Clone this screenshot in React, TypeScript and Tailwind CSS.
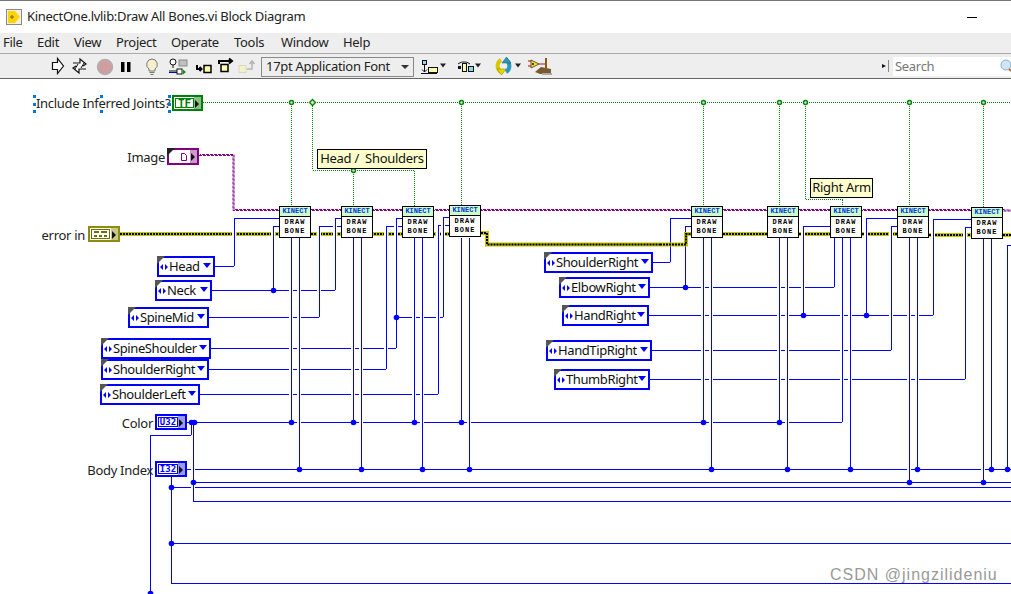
import React from "react";

const FONT = "font-['Noto_Sans','Liberation_Sans',sans-serif] tracking-[-0.3px]";

// every diagram coordinate below is a screen pixel; the canvas starts at y=79
const TOP = 79;

const NODES = [
  [279, 206],
  [341, 206],
  [402, 206],
  [449, 205],
  [691, 206],
  [767, 206],
  [830, 206],
  [897, 206],
  [971, 207],
];

const ENUMS: [string, number, number, number][] = [
  ["Head", 157, 256, 58],
  ["Neck", 155, 280, 57],
  ["SpineMid", 128, 307, 81],
  ["SpineShoulder", 101, 338, 110],
  ["ShoulderRight", 101, 359, 108],
  ["ShoulderLeft", 100, 384, 100],
  ["ShoulderRight", 544, 252, 109],
  ["ElbowRight", 559, 277, 91],
  ["HandRight", 562, 305, 87],
  ["HandTipRight", 546, 340, 106],
  ["ThumbRight", 554, 369, 96],
];

const LABELS: [string, number, number][] = [
  ["Image", 165, 158],
  ["error in", 85, 236],
  ["Color", 153, 424],
  ["Body Index", 153, 471],
];

const H: [number, number, number][] = [
  [266, 215, 234], [218, 234, 279], [290, 212, 335], [218, 335, 341], [226, 273, 279],
  [317, 209, 319], [226, 319, 341], [348, 211, 396], [218, 396, 402], [369, 209, 386],
  [226, 386, 402], [394, 200, 438], [225, 438, 449], [317, 396, 443], [217, 443, 449],
  [422, 187, 842], [435, 150, 191], [482, 193, 1011], [501, 193, 1011], [469, 187, 1011],
  [487, 171, 1011], [543, 171, 1011], [583, 171, 1011], [262, 653, 670], [218, 670, 691],
  [287, 650, 834], [226, 685, 691], [315, 649, 933], [226, 803, 830], [218, 866, 897],
  [219, 933, 971], [350, 652, 891], [226, 891, 897], [379, 650, 965], [227, 965, 971],
  [245, 1007, 1011],
];

const V: [number, number, number][] = [
  [234, 218, 266], [273, 226, 290], [335, 218, 290], [319, 226, 317], [396, 218, 348],
  [386, 226, 369], [438, 225, 394], [443, 217, 317], [670, 218, 262], [685, 226, 287],
  [834, 238, 287], [803, 226, 315], [866, 218, 315], [933, 219, 315], [891, 226, 350],
  [965, 227, 379], [1007, 245, 469],
  ...[291, 353, 414, 461, 703, 779, 842].map((x): [number, number, number] => [x, 238, 422]),
  ...[909, 983].map((x): [number, number, number] => [x, 238, 482]),
  ...[299, 361, 422, 469, 711, 787, 850, 917, 991].map((x): [number, number, number] => [x, 238, 469]),
  [191, 422, 435], [193, 422, 501], [171, 476, 583], [150, 435, 594],
];

const DOTS = [
  [191, 422], [194, 422],
  ...[291, 353, 414, 461, 703, 779].map((x) => [x, 422]),
  ...[299, 361, 422, 469, 711, 787, 850, 917, 991, 1007].map((x) => [x, 469]),
  [273, 290], [396, 317], [685, 287], [803, 315], [866, 315],
  [193, 482], [909, 482], [983, 482], [171, 487], [171, 543], [150, 593],
];

// straight runs only, starting on whole pixels, so that the 1-1 dash stays crisp
const DOTTED = [
  "M203 102.5H1011",
  "M291.5 102V206",
  "M312.5 102V170",
  "M313 170.5H415",
  "M414.5 171V206",
  "M353.5 168V206",
  "M461.5 102V205",
  "M703.5 102V206",
  "M779.5 102V206",
  "M805.5 102V199",
  "M806 199.500H843",
  "M842.5 200V206",
  "M909.5 102V206",
  "M983.5 102V207",
];

const GREEN_NODES = [[291, 102], [461, 102], [703, 102], [779, 102], [805, 102], [909, 102], [983, 102], [353, 170]];

const ERROR_WIRES = [
  "M120 234H279",
  "M311 234H402",
  "M433 234H449",
  "M481 233H487V244.5H660",
  "M723 234H767",
  "M799 234H830",
  "M862 234H897",
  "M929 235H971",
  "M1003 235H1011",
];

const PURPLE = "M199 155.5H233V210.5H1003V211H1011";

const ErrorWire = ({ d }: { d: string }) => (
  <g fill="none">
    <path d={d} stroke="#c4c400" strokeWidth={4} />
    <path d={d} stroke="#000" strokeWidth={2} strokeDasharray="2 1" />
  </g>
);

const Wires = () => (
  <svg className="absolute left-0 top-0" width={1011} height={515} viewBox={`0 ${TOP} 1011 515`}>
    <g fill="none" stroke="#008000" strokeDasharray="1 1">
      {DOTTED.map((d) => (
        <path key={d} d={d} />
      ))}
    </g>
    {GREEN_NODES.map(([x, y]) => (
      <circle key={`${x}-${y}`} cx={x + 0.5} cy={y + 0.5} r={2} fill="#c8e8c8" stroke="#008000" strokeWidth={1.4} />
    ))}
    <path d="M312.500 99.500l3 3-3 3-3-3z" fill="#c8e8c8" stroke="#008000" strokeWidth={1.3} />

    <g fill="none" stroke="#800080">
      <path d={PURPLE} strokeDasharray="3 1" />
      <path d={PURPLE} strokeDasharray="3 1" strokeDashoffset={2} transform="translate(1 -1)" />
    </g>

    {ERROR_WIRES.map((d) => (
      <ErrorWire key={d} d={d} />
    ))}

    <g stroke="#0000ff" fill="none">
      {H.map(([y, a, b]) => (
        <path key={`${y}-${a}`} d={`M${a} ${y + 0.5}H${b}`} />
      ))}
    </g>
    <g stroke="#fff" strokeWidth={4} fill="none">
      {V.map(([x, a, b]) => (
        <path key={`${x}-${a}`} d={`M${x} ${a + 3}V${b - 3}`} />
      ))}
    </g>
    <g stroke="#0000ff" fill="none">
      {V.map(([x, a, b]) => (
        <path key={`${x}-${a}`} d={`M${x + 0.5} ${a}V${b}`} />
      ))}
    </g>
    <ErrorWire d="M660 244.5H686V234H691" />
    {DOTS.map(([x, y]) => (
      <circle key={`${x}-${y}`} cx={x + 0.5} cy={y + 0.5} r={2.8} fill="#0000ff" />
    ))}
  </svg>
);

const Node = ({ x, y }: { x: number; y: number }) => (
  <div
    className="absolute flex h-[32px] w-[32px] flex-col border border-black bg-white text-center font-['Liberation_Mono',monospace] text-[7px] font-bold leading-[9px]"
    style={{ left: x, top: y - TOP }}
  >
    <div className="h-[10px] border-b border-black bg-[#ccffcc] tracking-[0px] text-[#0033dd]">KINECT</div>
    <div className="pt-[1px] tracking-[1px] text-black">
      DRAW
      <br />
      BONE
    </div>
  </div>
);

const EnumControl = ({ text, x, y, w }: { text: string; x: number; y: number; w: number }) => (
  <div
    className={`absolute flex h-[21px] items-center border-2 border-[#0000ff] bg-white pl-[1px] pr-[2px] text-[13px] text-[#111] ${FONT} tracking-[-0.4px]`}
    style={{ left: x, top: y - TOP, width: w }}
  >
    <span className="absolute -left-[2px] -top-[2px] h-0 w-0 border-r-[8px] border-t-[8px] border-r-transparent border-t-[#555]" />
    <svg width={8} height={6} viewBox="0 0 8 6" className="mr-[1px] shrink-0">
      <path d="M3 0v6L0 3zM5 0v6l3-3z" fill="#0000ff" />
    </svg>
    <span className="flex-1 whitespace-nowrap">{text}</span>
    <svg width={8} height={5} viewBox="0 0 8 5" className="-mt-[3px] shrink-0">
      <path d="M0 0h8L4 5z" fill="#0000ff" />
    </svg>
  </div>
);

const Arrow = () => (
  <svg width={4} height={8} viewBox="0 0 4 8" className="absolute right-[2px] top-[3px]">
    <path d="M0 0l4 4-4 4z" fill="#111" />
  </svg>
);

const Terminal = ({ x, y, w, text, size, outer, inner, shade }: { x: number; y: number; w: number; text: string; size: string; outer: string; inner: string; shade: string }) => (
  <div
    className={`absolute flex h-[16px] items-center border-2 bg-white ${outer}`}
    style={{ left: x, top: y - TOP, width: w }}
  >
    <div className={`ml-[1px] flex h-[10px] flex-1 items-center justify-center border font-['DejaVu_Sans_Mono',monospace] font-bold leading-none tracking-[0px] ${size} ${inner}`}>
      {text}
    </div>
    <div className={`h-full w-[7px] ${shade}`} />
    <Arrow />
  </div>
);

const Note = ({ text, x, y, w }: { text: string; x: number; y: number; w: number }) => (
  <div
    className={`absolute flex h-[20px] items-center justify-center whitespace-pre border border-black bg-[#ffffcc] text-[13px] text-[#111] ${FONT}`}
    style={{ left: x, top: y - TOP, width: w }}
  >
    {text}
  </div>
);

const Label = ({ text, right, y }: { text: string; right: number; y: number }) => (
  <div
    className={`absolute -translate-y-1/2 whitespace-nowrap text-[13px] text-[#222] ${FONT}`}
    style={{ right: 1011 - right, top: y - TOP }}
  >
    {text}
  </div>
);

const HANDLES = [
  [33, 95], [33, 103], [33, 110], [100, 95], [100, 110], [168, 95], [168, 103], [168, 110],
];

const Canvas = () => (
  <div className="relative flex-1 overflow-hidden bg-white">
    <Wires />
    {/* front panel terminals */}
    <div className={`absolute left-[36px] top-[15px] whitespace-nowrap text-[13px] leading-[18px] text-[#222] ${FONT}`}>
      Include Inferred Joints?
    </div>
    {HANDLES.map(([x, y]) => (
      <div key={`${x}-${y}`} className="absolute h-[3px] w-[3px] bg-[#0078d7]" style={{ left: x, top: y - TOP }} />
    ))}
    <Terminal x={172} y={95} w={31} text="TF" size="text-[11px]" outer="border-[#008000]" inner="border-[#008000] text-[#008000]" shade="bg-[#88c088]" />
    <div className="absolute left-[167px] top-[69px] flex h-[17px] w-[32px] items-center border-2 border-[#800080] bg-white">
      <span className="absolute -left-[2px] -top-[2px] h-0 w-0 border-r-[8px] border-t-[8px] border-r-transparent border-t-[#222]" />
      <svg width={8} height={8} viewBox="0 0 8 8" className="ml-[11px]">
        <path d="M1.500.5h3l2 2v5h-5z" fill="#fff" stroke="#800080" />
      </svg>
      <div className="absolute right-0 top-0 h-full w-[7px] bg-[#cc99cc]" />
      <Arrow />
    </div>
    <div className="absolute left-[88px] top-[147px] flex h-[16px] w-[32px] items-center border-2 border-[#8c8c10] bg-white">
      <svg width={20} height={10} viewBox="0 0 20 10" className="ml-[1px]">
        <rect x={0.5} y={0.5} width={18} height={9} fill="#fff" stroke="#6f6f00" />
        <path d="M3 3h5M10 3h6" stroke="#6f6f00" strokeWidth={2} />
        <path d="M3 7h3M8 7h3M13 7h3" stroke="#6f6f00" strokeWidth={2} />
      </svg>
      <div className="absolute right-0 top-0 h-full w-[7px] bg-[#c8c88a]" />
      <Arrow />
    </div>
    <Terminal x={155} y={414} w={32} text="U32" size="text-[9px]" outer="border-[#0000ff]" inner="border-[#0000ff] text-[#0000ff]" shade="bg-[#9999ff]" />
    <Terminal x={155} y={461} w={32} text="I32" size="text-[9px]" outer="border-[#0000ff]" inner="border-[#0000ff] text-[#0000ff]" shade="bg-[#9999ff]" />

    {LABELS.map(([text, right, y]) => (
      <Label key={text} text={text} right={right} y={y} />
    ))}
    {ENUMS.map(([text, x, y, w]) => (
      <EnumControl key={`${text}-${x}`} text={text} x={x} y={y} w={w} />
    ))}
    {NODES.map(([x, y]) => (
      <Node key={x} x={x} y={y} />
    ))}
    <Note text="Head /  Shoulders" x={317} y={149} w={110} />
    <Note text="Right Arm" x={810} y={178} w={63} />

    <div className="absolute left-[830px] top-[486px] whitespace-nowrap font-['Liberation_Sans',sans-serif] text-[16px] leading-[20px] tracking-[1px] text-[#999999]">
      CSDN @jingzilideniu
    </div>
  </div>
);

const ToolIcons = () => (
  <svg width={210} height={24} viewBox="0 0 210 24" className="ml-[50px] shrink-0">
    {/* run */}
    <path d="M2.500 8.500h5v-4l6 7.500-6 7.500v-4h-5z" fill="#fff" stroke="#111" strokeWidth={1.2} />
    {/* run continuously */}
    <path d="M23 9h7V5l6 5-3 2M36 15h-7v4l-6-5 3-2" fill="#fff" stroke="#111" strokeWidth={1.2} />
    <path d="M25 15l3-5M31 14l3-5" fill="none" stroke="#111" strokeWidth={1} />
    {/* abort */}
    <circle cx={55} cy={13} r={7.500} fill="#cf9f9f" stroke="#b0b0b0" strokeWidth={1.500} />
    {/* pause */}
    <path d="M71 8h3.500v10H71zM77 8h3.500v10H77z" fill="#000" />
    {/* highlight */}
    <path d="M102 5a5.500 5.500 0 0 1 3 10v2h-6v-2a5.500 5.500 0 0 1 3-10z" fill="#f4f0cf" stroke="#777" />
    <path d="M99.500 18.500h5M100.500 20.500h3" stroke="#777" />
    {/* retain wire values */}
    <circle cx={123} cy={8} r={3} fill="#fff" stroke="#111" />
    <path d="M123 11v3M119 17h8" stroke="#111" />
    <path d="M119 18.500h9" stroke="#0000c0" />
    <rect x={129} y={6} width={8} height={6} fill="#c0c0c0" stroke="#888" />
    <rect x={127} y={15} width={5} height={5} fill="#fff" stroke="#111" />
    <path d="M133 15.500l3 2.500-3 2.500z" fill="#00a000" />
    {/* step into */}
    <path d="M147 11v4h4M149.500 13l2 2-2 2" fill="none" stroke="#000" strokeWidth={2} />
    <rect x={154} y={11.500} width={7} height={7} fill="#ffffb0" stroke="#000" strokeWidth={1.500} />
    {/* step over */}
    <path d="M169 10V7h12M179 4.500l3 2.500-3 2.500" fill="none" stroke="#000" strokeWidth={2} />
    <rect x={171} y={10.500} width={7} height={7} fill="#ffffb0" stroke="#000" strokeWidth={1.500} />
    {/* step out, disabled */}
    <rect x={189} y={11.500} width={7} height={7} fill="#f2f2c8" stroke="#d8d8c0" />
    <path d="M197 15h5V8M199.500 10l2.500-3 2.500 3" fill="none" stroke="#b5b5b5" strokeWidth={1.500} />
  </svg>
);

const AlignIcons = () => (
  <svg width={140} height={24} viewBox="0 0 140 24" className="ml-[6px] shrink-0">
    <rect x={2.500} y={6.500} width={4} height={4} fill="#8fd8ee" stroke="#111" />
    <path d="M4.500 11v7M2 15.500l2.500 2.500 2.500-2.500M1 19.500h16" fill="none" stroke="#111" />
    <rect x={8.500} y={13.500} width={9} height={5} fill="#ffffb0" stroke="#111" />
    <path d="M20 9.500h6l-3 4z" fill="#222" />
    <path d="M38 10c3-2 4-2 6-2s3 0 6 2" fill="none" stroke="#111" />
    <rect x={38} y={12} width={3} height={3} fill="#111" />
    <rect x={42.500} y={9.500} width={4} height={8} fill="#ffffb0" stroke="#111" />
    <rect x={48.500} y={12.500} width={5} height={5} fill="#8fd8ee" stroke="#111" />
    <path d="M55 9.500h6l-3 4z" fill="#222" />
    <path d="M81 6a7 7 0 0 0 0 12" fill="none" stroke="#d8c800" strokeWidth={4} />
    <path d="M77 15h9l-4.500 6z" fill="#e8d800" stroke="#807800" strokeWidth={0.5} />
    <path d="M86 6a7 7 0 0 1 0 12" fill="none" stroke="#2a9ab8" strokeWidth={4} />
    <path d="M91 9h-9l4.500-6z" fill="#2a9ab8" stroke="#145868" strokeWidth={0.5} />
    <path d="M95 9.500h6l-3 4z" fill="#222" />
    <path d="M111 6l8 4-8 4z" fill="#ffe800" stroke="#555" />
    <path d="M114 10h-2M113 9v2" stroke="#000" />
    <path d="M111 7h-3M111 12h-3" stroke="#c00" />
    <path d="M119 10h6" stroke="#a52020" />
    <path d="M126 4v10" stroke="#8a5a10" strokeWidth={2} />
    <path d="M115 18l6-5 10 2v5h-11z" fill="#7a5a30" />
    <path d="M122 20h10" stroke="#aaa" strokeWidth={2} />
  </svg>
);

const MENU = [
  ["File", "w-[34px]"],
  ["Edit", "w-[37px]"],
  ["View", "w-[42px]"],
  ["Project", "w-[55px]"],
  ["Operate", "w-[63px]"],
  ["Tools", "w-[47px]"],
  ["Window", "w-[62px]"],
  ["Help", "w-[40px]"],
];

export default function App() {
  return (
    <div className={`flex h-[594px] w-[1011px] flex-col overflow-hidden bg-white ${FONT}`}>
      <div className="flex h-[33px] items-center border-t border-[#777] pl-[6px] text-[13px] text-[#222]">
        <svg width={16} height={16} viewBox="0 0 16 16" className="mr-[5px]">
          <rect x={0.500} y={0.500} width={15} height={15} fill="#f4f0e0" stroke="#888" />
          <path d="M2 2h7l5 6-5 6H2z" fill="#ffd400" />
          <path d="M6 6v4M4 8h4" stroke="#7a6000" />
        </svg>
        <span>KinectOne.lvlib:Draw All Bones.vi Block Diagram</span>
        <div className="ml-auto mr-[34px] h-[1px] w-[10px] bg-black" />
      </div>
      <div className="flex h-[20px] items-center bg-[#eeeeee] pl-[3px] text-[13px] text-[#222]">
        {MENU.map(([name, width]) => (
          <span key={name} className={width}>
            {name}
          </span>
        ))}
      </div>
      <div className="flex h-[26px] items-center border-y border-t-[#aaaaaa] border-b-[#666666] bg-[#eeeeee]">
        <ToolIcons />
        <div className="ml-[1px] mt-[1px] flex h-[20px] w-[153px] shrink-0 items-center justify-between border border-[#888] px-[4px] text-[13px] text-[#222]">
          <span>17pt Application Font</span>
          <svg width={8} height={4} viewBox="0 0 8 4">
            <path d="M0 0h8L4 4z" fill="#333" />
          </svg>
        </div>
        <AlignIcons />
        <div className="ml-auto flex items-center gap-[3px]">
          <svg width={8} height={12} viewBox="0 0 8 12">
            <path d="M0 4l4 2-4 2z" fill="#111" />
            <path d="M6.500 0v12" stroke="#888" />
          </svg>
          <div className="mt-[1px] flex h-[19px] w-[118px] items-center justify-between bg-white pl-[2px] text-[13px] text-[#777]">
            <span>Search</span>
            <svg width={11} height={15} viewBox="0 0 11 15">
              <circle cx={6} cy={6} r={5} fill="#cfe6f8" stroke="#8ab0d0" />
              <path d="M9 10l2 2" stroke="#a07050" strokeWidth={2} />
            </svg>
          </div>
        </div>
      </div>
      <Canvas />
    </div>
  );
}
